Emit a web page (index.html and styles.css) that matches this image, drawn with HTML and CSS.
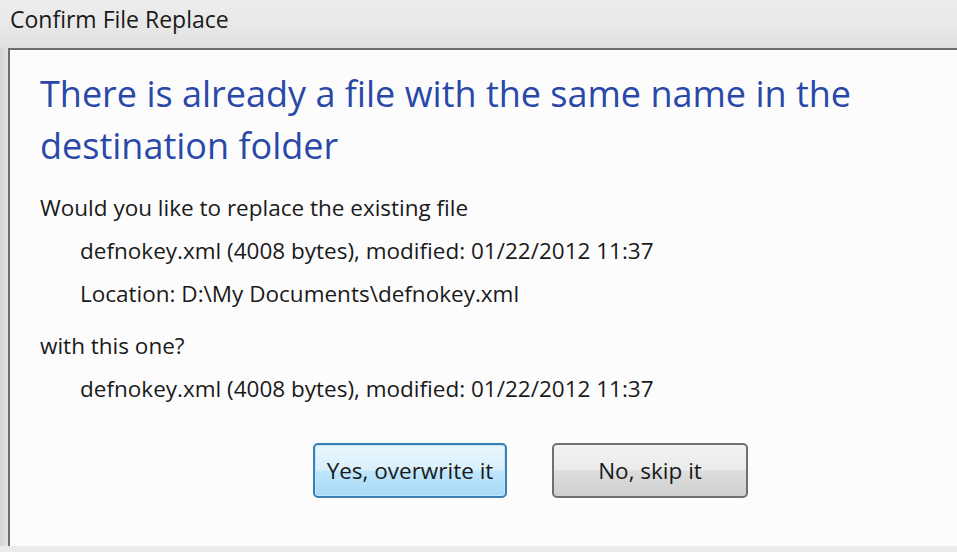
FILE: index.html
```html
<!DOCTYPE html>
<html>
<head>
<meta charset="utf-8">
<link rel="stylesheet" href="styles.css">
</head>
<body>
<div class="frame">
  <div class="titlebar">Confirm File Replace</div>
  <div class="window">
    <div class="content">
      <h1 class="instruction">There is already a file with the same name in the destination folder</h1>
      <p class="line">Would you like to replace the existing file</p>
      <p class="line indent">defnokey.xml (4008 bytes), modified: 01/22/2012 11:37</p>
      <p class="line indent">Location: D:\My Documents\defnokey.xml</p>
      <p class="line gap">with this one?</p>
      <p class="line indent">defnokey.xml (4008 bytes), modified: 01/22/2012 11:37</p>
      <div class="buttons">
        <button class="btn btn-default">Yes, overwrite it</button>
        <button class="btn">No, skip it</button>
      </div>
    </div>
  </div>
  <div class="bottom"></div>
</div>
</body>
</html>
```

FILE: styles.css
```css
html, body {
  margin: 0;
  padding: 0;
  width: 957px;
  height: 552px;
  overflow: hidden;
}
body {
  background: #dcdcdc;
  font-family: "Open Sans", "Noto Sans", sans-serif;
  color: #1a1a1a;
}
.frame {
  display: flex;
  flex-direction: column;
  height: 552px;
  background: linear-gradient(to right, #d6d6d6 0, #e2e2e2 8px, #e6e6e6 100%);
}
.titlebar {
  height: 48px;
  box-sizing: border-box;
  padding: 5px 0 0 10px;
  font-size: 23px;
  line-height: 28px;
  color: #1a1a1a;
  background: linear-gradient(to bottom, #ededed 0, #e8e8e8 55%, #e0e0e0 100%);
}
.window {
  flex: 1;
  margin-left: 8px;
  border-left: 2px solid #6f6f6f;
  border-top: 2px solid #6f6f6f;
  background: #fcfcfc;
}
.content {
  padding: 18px 0 0 30px;
}
.instruction {
  margin: 0 0 14px 0;
  font-weight: normal;
  font-size: 36px;
  line-height: 52px;
  color: #2a48a8;
}
.line {
  margin: 0;
  font-size: 22.5px;
  line-height: 43px;
  white-space: nowrap;
}
.indent {
  padding-left: 40px;
}
.gap {
  margin-top: 9px;
}
.buttons {
  display: flex;
  gap: 45px;
  padding-left: 273px;
  margin-top: 33px;
}
.btn {
  width: 196px;
  height: 55px;
  box-sizing: border-box;
  font-family: inherit;
  font-size: 22.5px;
  color: #1a1a1a;
  border: 2px solid #707070;
  border-radius: 5px;
  background: linear-gradient(to bottom, #f2f2f2 0, #ebebeb 48%, #dddddd 52%, #cfcfcf 100%);
  padding: 0;
}
.btn-default {
  width: 194px;
  border-color: #3c7fb1;
  background: linear-gradient(to bottom, #eaf6fd 0, #d9f0fc 48%, #bee6fd 52%, #a7d9f5 100%);
  box-shadow: inset 0 0 0 1px #bfe7fb;
}
.bottom {
  height: 6px;
  background: #ebebeb;
}
```
